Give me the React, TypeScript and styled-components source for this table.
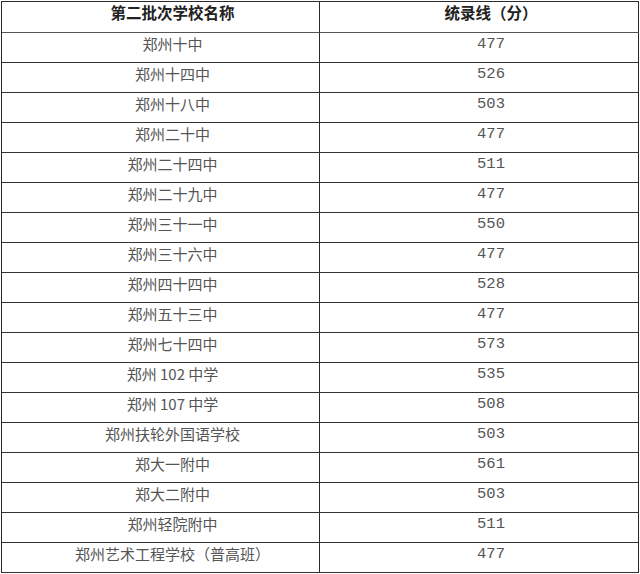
import { Fragment } from "react";
import styled, { createGlobalStyle } from "styled-components";

const GlobalStyle = createGlobalStyle`
  html, body {
    margin: 0;
    padding: 0;
    background: #ffffff;
  }
`;

const rows: [string, string][] = [
  ["郑州十中", "477"],
  ["郑州十四中", "526"],
  ["郑州十八中", "503"],
  ["郑州二十中", "477"],
  ["郑州二十四中", "511"],
  ["郑州二十九中", "477"],
  ["郑州三十一中", "550"],
  ["郑州三十六中", "477"],
  ["郑州四十四中", "528"],
  ["郑州五十三中", "477"],
  ["郑州七十四中", "573"],
  ["郑州 102 中学", "535"],
  ["郑州 107 中学", "508"],
  ["郑州扶轮外国语学校", "503"],
  ["郑大一附中", "561"],
  ["郑大二附中", "503"],
  ["郑州轻院附中", "511"],
  ["郑州艺术工程学校（普高班）", "477"],
];

const Page = styled.div`
  padding: 1px 0 0 1px;
`;

const Table = styled.div`
  display: grid;
  grid-template-columns: 318px 319px;
  grid-template-rows: 31px;
  grid-auto-rows: 30px;
  width: 637px;
  border-left: 1px solid #2a2a2a;
  border-top: 1px solid #2a2a2a;
  font-family: "Noto Sans CJK SC", "Noto Sans", sans-serif;
`;

const Cell = styled.div<{ $head?: boolean; $num?: boolean }>`
  box-sizing: border-box;
  display: flex;
  align-items: center;
  justify-content: center;
  padding: 0 0 ${({ $num }) => ($num ? "5px" : "9px")} 24px;
  border-right: 1px solid #2a2a2a;
  border-bottom: 1px solid ${({ $head }) => ($head ? "#555" : "#333")};
  font-size: ${({ $head, $num }) => ($head ? "15.5px" : $num ? "15.5px" : "15px")};
  font-weight: ${({ $head }) => ($head ? 700 : 400)};
  color: ${({ $head }) => ($head ? "#222" : "#555")};
  white-space: pre;
  line-height: 1;
  font-family: ${({ $num }) =>
    $num
      ? `"Liberation Mono", "Noto Sans CJK SC", monospace`
      : `"Noto Sans CJK SC", "Noto Sans", sans-serif`};
`;

export default function App() {
  return (
    <>
      <GlobalStyle />
      <Page>
        <Table>
          <Cell $head>第二批次学校名称</Cell>
          <Cell $head>统录线（分）</Cell>
          {rows.map(([name, score]) => (
            <Fragment key={name}>
              <Cell>{name}</Cell>
              <Cell $num>{score}</Cell>
            </Fragment>
          ))}
        </Table>
      </Page>
    </>
  );
}
